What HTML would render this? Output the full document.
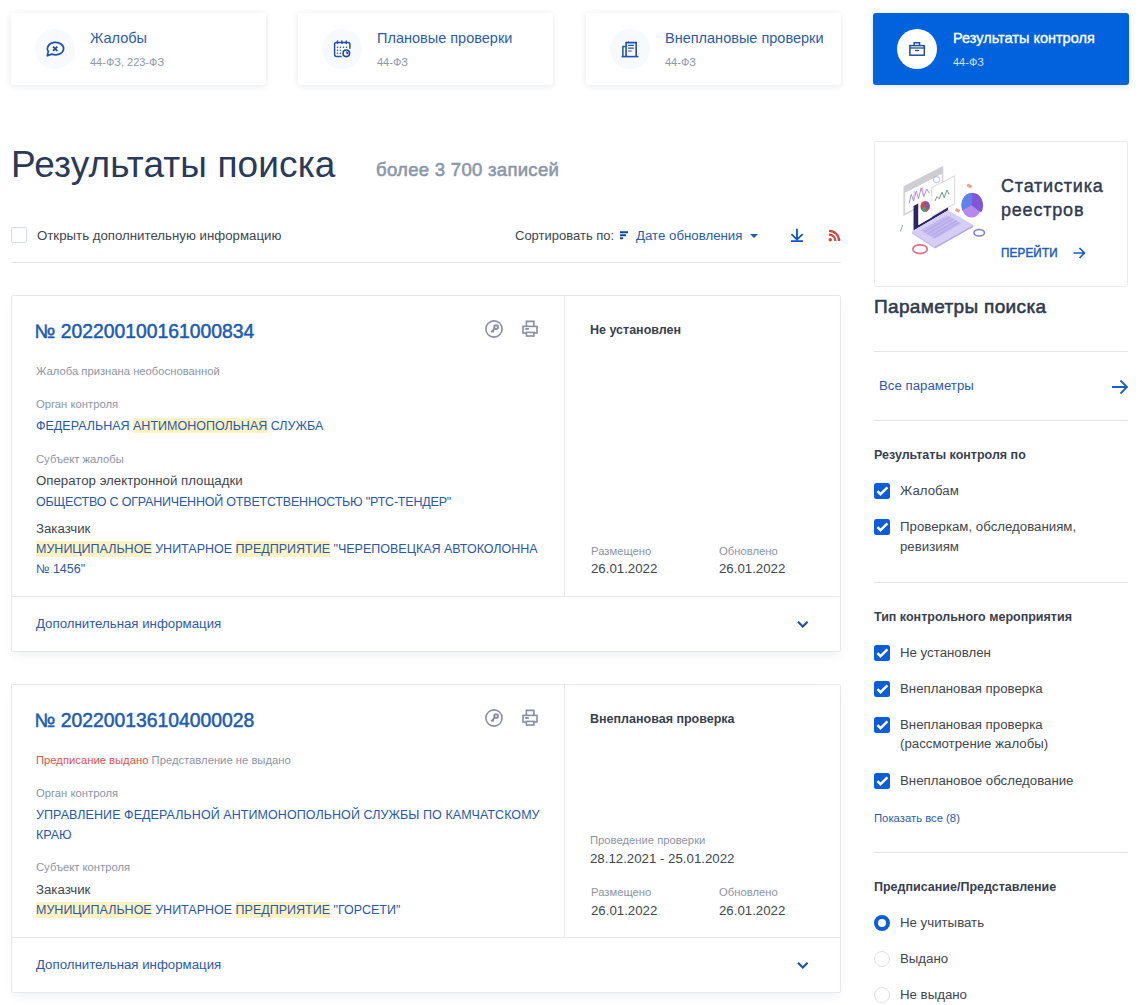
<!DOCTYPE html>
<html><head><meta charset="utf-8">
<style>
*{box-sizing:border-box;margin:0;padding:0}
html,body{width:1141px;height:1005px;overflow:hidden;background:#fff;font-family:"Liberation Sans",sans-serif;color:#333}
.a{position:absolute;white-space:nowrap;line-height:1}
.tcard{position:absolute;top:13px;width:255px;height:71.5px;background:#fff;border-radius:3px;box-shadow:0 1px 6px rgba(40,60,100,0.12)}
.tcard .ic{position:absolute;left:24px;top:16px;width:40px;height:40px;border-radius:50%;background:#f8f9fc}
.tcard .ic svg{position:absolute;left:0;top:-1px}
.tcard.act{background:#0062dc;box-shadow:0 1px 6px rgba(0,60,160,0.15)}
.tcard.act .ic{background:#fff}
.hline{position:absolute;height:1px;background:#e3e6eb}
.card{position:absolute;left:11px;width:830px;border:1px solid #e6e8ed;border-radius:2px;background:#fff;box-shadow:0 6px 10px -3px rgba(40,50,90,0.08)}
.vdiv{position:absolute;top:0;width:1px;background:#e6e8ed}
.num{color:#1b5bb6}
.lblc{color:#8b94a6}
.bluc{color:#2d5aa8}
.upc{color:#2958a6}
.dkc{color:#40464f}
.hl{background:#fdf2c2;padding:1px 0 0.3px}
.bold13{font-weight:bold;color:#394050}
.med{-webkit-text-stroke:0.4px currentColor}
.cb{position:absolute;left:874px;width:16px;height:16px;border-radius:2.5px;background:#0b5ddb}
.cb svg{position:absolute;left:0;top:0}
.rad{position:absolute;left:874px;width:16px;height:16px;border-radius:50%;border:1px solid #dfe2e8;background:#fff}
.rad.on{border:4.5px solid #0b5ddb}
.tcard .t{position:absolute;left:79px;top:17.7px;font-size:14.5px;line-height:14px;color:#2b5cab;white-space:nowrap}
.tcard .s{position:absolute;left:79px;top:43px;font-size:11px;line-height:12px;color:#8c97aa;white-space:nowrap}
.tcard.act .t{color:#fff;left:80px;-webkit-text-stroke:0.35px #fff}
.tcard.act .s{color:#d2e3ff;left:80px}
</style></head><body>
<!-- top cards -->
<div class="tcard" style="left:11px">
  <div class="ic"><svg width="40" height="40" viewBox="0 0 40 40">
    <path d="M16.8 26.1 A8.1 6.2 0 1 0 13.3 23.4 L12.3 27.8 Z" fill="none" stroke="#1d55aa" stroke-width="1.7" stroke-linejoin="round"/>
    <path d="M18.1 18.6 L22.3 22.8 M22.3 18.6 L18.1 22.8" stroke="#1d4a94" stroke-width="1.8"/>
  </svg></div>
  <div class="t">Жалобы</div><div class="s">44-ФЗ, 223-ФЗ</div>
</div>
<div class="tcard" style="left:298px">
  <div class="ic"><svg width="40" height="40" viewBox="0 0 40 40">
    <path d="M19.6 28.4 H14.4 Q12.6 28.4 12.6 26.6 V16.2 Q12.6 14.4 14.4 14.4 H26.1 Q27.9 14.4 27.9 16.2 V20.8" fill="none" stroke="#1f53a6" stroke-width="1.5"/>
    <path d="M15.5 12.6 V16 M19.9 12.6 V16 M24.3 12.6 V16" stroke="#1f53a6" stroke-width="1.5"/>
    <g fill="#1f4a8f"><circle cx="15.5" cy="19.3" r="0.75"/><circle cx="18.4" cy="19.3" r="0.75"/><circle cx="21.5" cy="19.3" r="0.75"/><circle cx="24.5" cy="19.3" r="0.75"/><circle cx="15.5" cy="22.3" r="0.75"/><circle cx="18.4" cy="22.3" r="0.75"/><circle cx="15.5" cy="25.3" r="0.75"/><circle cx="18.4" cy="25.3" r="0.75"/></g>
    <circle cx="24.3" cy="25.3" r="3.3" fill="#fff" stroke="#1f4a94" stroke-width="1.6"/>
    <path d="M24.2 25.4 V23.2 A2.2 2.2 0 0 1 26.1 26.4 Z" fill="#1f4a94"/>
  </svg></div>
  <div class="t">Плановые проверки</div><div class="s">44-ФЗ</div>
</div>
<div class="tcard" style="left:586px">
  <div class="ic"><svg width="40" height="40" viewBox="0 0 40 40">
    <path d="M12.9 28.2 V18.4 H15.6" fill="none" stroke="#1f55ad" stroke-width="1.5"/>
    <path d="M16.1 28.2 V14.6 H26.2 V28.2" fill="none" stroke="#1f4f9e" stroke-width="1.6"/>
    <path d="M18.3 13.6 V14.8" stroke="#1f4f9e" stroke-width="1.2"/>
    <path d="M11.6 28.6 H28.4" stroke="#1f55ad" stroke-width="1.6"/>
    <path d="M18.1 17.4 H23.9 M18.1 20.2 H23.9 M18.1 23 H21.7" stroke="#1f4f9e" stroke-width="1.2"/>
  </svg></div>
  <div class="t">Внеплановые проверки</div><div class="s">44-ФЗ</div>
</div>
<div class="tcard act" style="left:873px;width:256px">
  <div class="ic"><svg width="40" height="40" viewBox="0 0 40 40">
    <rect x="12.9" y="17.6" width="14.4" height="9.6" fill="none" stroke="#1f4e9a" stroke-width="1.5"/>
    <path d="M17.2 17.4 V14.8 H22.6 V17.4" fill="none" stroke="#1f4e9a" stroke-width="1.5"/>
    <path d="M12.9 20 H27.3" stroke="#1f4e9a" stroke-width="1.3"/>
    <path d="M18 22.5 H22" stroke="#1f4e9a" stroke-width="1.3"/>
  </svg></div>
  <div class="t">Результаты контроля</div><div class="s">44-ФЗ</div>
</div>
<div class="a " style="left:11px;top:145.68px;font-size:37px;color:#2a3a57;letter-spacing:0.12px">Результаты поиска</div>
<div class="a med" style="left:376px;top:161.34px;font-size:18.5px;color:#8b97aa;-webkit-text-stroke:0.6px currentColor;letter-spacing:0.3px">более 3 700 записей</div>
<div class="a" style="left:11px;top:227px;width:16px;height:16px;border:1px solid #d9dde4;border-radius:2px"></div>
<div class="a dkc" style="left:37px;top:228.78px;font-size:13.25px;">Открыть дополнительную информацию</div>
<div class="a dkc" style="left:515px;top:229.00px;font-size:13px;">Сортировать по:</div>
<svg class="a" style="left:618px;top:229px" width="12" height="12" viewBox="0 0 12 12"><path d="M2 3.2 H10 M2 6.2 H8 M2 9.2 H5" stroke="#0c4a9e" stroke-width="2"/></svg>
<div class="a bluc" style="left:636px;top:228.78px;font-size:13.25px;">Дате обновления</div>
<svg class="a" style="left:748px;top:232px" width="12" height="8" viewBox="0 0 12 8"><path d="M2 2 H10 L6 6 Z" fill="#1f5bb3"/></svg>
<svg class="a" style="left:789px;top:227px" width="16" height="16" viewBox="0 0 16 16"><path d="M8 1.8 V12 M2.4 7.2 L8 12.6 L13.6 7.2 M2 14.2 H14" fill="none" stroke="#0c54c6" stroke-width="1.8"/></svg>
<svg class="a" style="left:827px;top:228.8px" width="15" height="14" viewBox="0 0 15 14"><circle cx="3.3" cy="10.7" r="1.7" fill="#cc4a40"/><path d="M2 5.6 A6.4 6.4 0 0 1 8.4 12 M2 1.8 A10.2 10.2 0 0 1 12.2 12" fill="none" stroke="#cc4a40" stroke-width="2.2"/></svg>
<div class="hline" style="left:11px;top:262px;width:830px"></div>
<div class="card" style="top:295px;height:357px"><div class="vdiv" style="left:552px;height:301px"></div><div class="hline" style="left:0;top:300px;width:828px;background:#e6e8ed"></div></div>
<div class="a num med" style="left:34.5px;top:322.22px;font-size:19.35px;-webkit-text-stroke:0.5px currentColor">№ 202200100161000834</div>
<svg class="a" style="left:484px;top:319px" width="20" height="20" viewBox="0 0 20 20"><circle cx="10" cy="10" r="8.1" fill="none" stroke="#8a8ea4" stroke-width="1.6"/><circle cx="12.1" cy="8.1" r="1.9" fill="none" stroke="#8a8ea4" stroke-width="1.9"/><path d="M10.6 9.6 L7.3 13.4" stroke="#8a8ea4" stroke-width="2"/><path d="M8.6 12 L9.9 13.2" stroke="#8a8ea4" stroke-width="1.6"/></svg>
<svg class="a" style="left:520px;top:319px" width="20" height="20" viewBox="0 0 20 20"><path d="M6.4 7 V2.4 H13.9 V7" fill="none" stroke="#8a8ea4" stroke-width="1.6"/><rect x="3" y="7.4" width="14" height="6.6" fill="none" stroke="#8a8ea4" stroke-width="1.6"/><rect x="6.4" y="13.4" width="7.5" height="3.6" fill="#fff" stroke="#8a8ea4" stroke-width="1.6"/><rect x="5.2" y="9" width="3.6" height="1.9" fill="#8a8ea4"/></svg>
<div class="a lblc" style="left:36px;top:365.68px;font-size:11.25px;">Жалоба признана необоснованной</div>
<div class="a lblc" style="left:36px;top:399.18px;font-size:11.25px;">Орган контроля</div>
<div class="a upc" style="left:36px;top:420.12px;font-size:12.5px;">ФЕДЕРАЛЬНАЯ <span class="hl">АНТИМОНОПОЛЬНАЯ</span> СЛУЖБА</div>
<div class="a lblc" style="left:36px;top:453.68px;font-size:11.25px;">Субъект жалобы</div>
<div class="a dkc" style="left:36px;top:474.38px;font-size:13.25px;">Оператор электронной площадки</div>
<div class="a upc" style="left:36px;top:495.52px;font-size:12.5px;letter-spacing:-0.2px">ОБЩЕСТВО С ОГРАНИЧЕННОЙ ОТВЕТСТВЕННОСТЬЮ "РТС-ТЕНДЕР"</div>
<div class="a dkc" style="left:36px;top:522.18px;font-size:13.25px;">Заказчик</div>
<div class="a upc" style="left:36px;top:543.32px;font-size:12.5px;"><span class="hl">МУНИЦИПАЛЬНОЕ</span> УНИТАРНОЕ <span class="hl">ПРЕДПРИЯТИЕ</span> "ЧЕРЕПОВЕЦКАЯ АВТОКОЛОННА</div>
<div class="a upc" style="left:36px;top:562.72px;font-size:12.5px;">№ 1456"</div>
<div class="a bluc" style="left:36px;top:617.28px;font-size:13.25px;">Дополнительная информация</div>
<svg class="a" style="left:795px;top:617px" width="16" height="14" viewBox="0 0 16 14"><path d="M3 4.8 L7.8 9.6 L12.6 4.8" fill="none" stroke="#1c50a2" stroke-width="2.1"/></svg>
<div class="a bold13" style="left:590px;top:324.32px;font-size:12.5px;">Не установлен</div>
<div class="a lblc" style="left:591px;top:545.88px;font-size:11.25px;">Размещено</div>
<div class="a lblc" style="left:719px;top:545.88px;font-size:11.25px;">Обновлено</div>
<div class="a dkc" style="left:591px;top:562.48px;font-size:13.25px;">26.01.2022</div>
<div class="a dkc" style="left:719px;top:562.48px;font-size:13.25px;">26.01.2022</div>
<div class="card" style="top:684px;height:309px"><div class="vdiv" style="left:552px;height:252px"></div><div class="hline" style="left:0;top:252px;width:828px;background:#e6e8ed"></div></div>
<div class="a num med" style="left:34.5px;top:711.02px;font-size:19.35px;-webkit-text-stroke:0.5px currentColor">№ 202200136104000028</div>
<svg class="a" style="left:484px;top:708px" width="20" height="20" viewBox="0 0 20 20"><circle cx="10" cy="10" r="8.1" fill="none" stroke="#8a8ea4" stroke-width="1.6"/><circle cx="12.1" cy="8.1" r="1.9" fill="none" stroke="#8a8ea4" stroke-width="1.9"/><path d="M10.6 9.6 L7.3 13.4" stroke="#8a8ea4" stroke-width="2"/><path d="M8.6 12 L9.9 13.2" stroke="#8a8ea4" stroke-width="1.6"/></svg>
<svg class="a" style="left:520px;top:708px" width="20" height="20" viewBox="0 0 20 20"><path d="M6.4 7 V2.4 H13.9 V7" fill="none" stroke="#8a8ea4" stroke-width="1.6"/><rect x="3" y="7.4" width="14" height="6.6" fill="none" stroke="#8a8ea4" stroke-width="1.6"/><rect x="6.4" y="13.4" width="7.5" height="3.6" fill="#fff" stroke="#8a8ea4" stroke-width="1.6"/><rect x="5.2" y="9" width="3.6" height="1.9" fill="#8a8ea4"/></svg>
<div class="a lblc" style="left:36px;top:754.68px;font-size:11.25px;"><span style="color:#d9534f">Предписание выдано</span> Представление не выдано</div>
<div class="a lblc" style="left:36px;top:787.78px;font-size:11.25px;">Орган контроля</div>
<div class="a upc" style="left:36px;top:809.02px;font-size:12.5px;letter-spacing:0.07px">УПРАВЛЕНИЕ ФЕДЕРАЛЬНОЙ АНТИМОНОПОЛЬНОЙ СЛУЖБЫ ПО КАМЧАТСКОМУ</div>
<div class="a upc" style="left:36px;top:828.72px;font-size:12.5px;">КРАЮ</div>
<div class="a lblc" style="left:36px;top:862.48px;font-size:11.25px;">Субъект контроля</div>
<div class="a dkc" style="left:36px;top:883.08px;font-size:13.25px;">Заказчик</div>
<div class="a upc" style="left:36px;top:904.42px;font-size:12.5px;"><span class="hl">МУНИЦИПАЛЬНОЕ</span> УНИТАРНОЕ <span class="hl">ПРЕДПРИЯТИЕ</span> "ГОРСЕТИ"</div>
<div class="a bluc" style="left:36px;top:957.78px;font-size:13.25px;">Дополнительная информация</div>
<svg class="a" style="left:795px;top:958px" width="16" height="14" viewBox="0 0 16 14"><path d="M3 4.8 L7.8 9.6 L12.6 4.8" fill="none" stroke="#1c50a2" stroke-width="2.1"/></svg>
<div class="a bold13" style="left:590px;top:712.52px;font-size:12.5px;">Внеплановая проверка</div>
<div class="a lblc" style="left:590px;top:834.98px;font-size:11.25px;">Проведение проверки</div>
<div class="a dkc" style="left:590px;top:851.58px;font-size:13.25px;">28.12.2021 - 25.01.2022</div>
<div class="a lblc" style="left:591px;top:886.98px;font-size:11.25px;">Размещено</div>
<div class="a lblc" style="left:719px;top:886.98px;font-size:11.25px;">Обновлено</div>
<div class="a dkc" style="left:591px;top:903.58px;font-size:13.25px;">26.01.2022</div>
<div class="a dkc" style="left:719px;top:903.58px;font-size:13.25px;">26.01.2022</div>
<div class="a" style="left:874px;top:141px;width:254px;height:146px;border:1px solid #e8eaee;border-radius:2px"></div>
<svg class="a" style="left:890px;top:155px" width="110" height="110" viewBox="0 0 1005 1005">
  <polygon points="130,290 480,110 480,360 130,545" fill="#fff" stroke="#d3d3d7" stroke-width="14"/>
  <polygon points="130,290 480,110 480,170 130,350" fill="#cdcdd2"/>
  <path d="M175,440 L195,360 L215,420 L240,330 L260,400 L285,300 L310,380 L335,310 L360,350" fill="none" stroke="#9d8fe0" stroke-width="9"/>
  <path d="M220,400 L220,330 M300,360 L300,290" stroke="#e8a0b8" stroke-width="8"/>
  <circle cx="425" cy="225" r="28" fill="none" stroke="#a8b0e8" stroke-width="8"/>
  <polygon points="380,300 590,190 590,445 380,560" fill="#fff" stroke="#dcdce0" stroke-width="10"/>
  <path d="M410,420 L430,380 L450,400 L475,340 L495,390 L520,320 L540,360" fill="none" stroke="#6a9a80" stroke-width="9"/>
  <polygon points="215,465 260,440 260,640 530,480 530,505 215,690" fill="#2a2760"/>
  <polygon points="260,440 380,375 380,570 260,640" fill="#fff"/>
  <ellipse cx="320" cy="470" rx="42" ry="50" fill="#c84a5a"/>
  <path d="M320,470 L285,495 A42,50 0 0 0 340,515 Z" fill="#5a9a70"/>
  <path d="M320,470 L320,420 A42,50 0 0 1 360,490 Z" fill="#7a5ab0"/>
  <polygon points="200,700 535,505 760,640 410,835" fill="#d6cef6"/>
  <polygon points="280,690 520,550 650,625 410,765" fill="#c2b8ee"/>
  <path d="M310,705 L550,565 M340,722 L580,582 M370,740 L610,600 M400,757 L630,615" stroke="#a89ce0" stroke-width="6"/>
  <polygon points="410,835 760,640 760,658 410,855" fill="#b4a8e6"/>
  <polygon points="200,700 410,835 410,855 200,718" fill="#c8bef0"/>
  <ellipse cx="745" cy="460" rx="92" ry="112" fill="#b689ec"/>
  <path d="M745,460 L745,348 A92,112 0 0 0 660,505 Z" fill="#5d82ea"/>
  <path d="M745,460 L745,348 A92,112 0 0 1 832,525 Z" fill="#8256d2"/>
  <rect x="703" y="268" width="44" height="30" fill="#f0a090" transform="rotate(28 725 283)"/>
  <rect x="598" y="492" width="40" height="28" fill="#f0a090" transform="rotate(28 618 506)"/>
  <ellipse cx="815" cy="710" rx="48" ry="30" fill="#fff" stroke="#7a82dc" stroke-width="14"/>
  <ellipse cx="275" cy="860" rx="66" ry="40" fill="#fff" stroke="#e07484" stroke-width="16"/>
  <path d="M95,700 L115,640" stroke="#8a96c8" stroke-width="8"/>
</svg>
<div class="a med" style="left:1001px;top:177.36px;font-size:18px;color:#2f3a4f;letter-spacing:0.8px">Статистика</div>
<div class="a med" style="left:1001px;top:200.96px;font-size:18px;color:#2f3a4f;letter-spacing:0.8px">реестров</div>
<div class="a " style="left:1001px;top:246.72px;font-size:12.5px;color:#1b5ec2;-webkit-text-stroke:0.5px currentColor;letter-spacing:0.2px;transform:scaleX(0.93);transform-origin:0 0">ПЕРЕЙТИ</div>
<svg class="a" style="left:1071px;top:245px" width="16" height="16" viewBox="0 0 16 16"><path d="M2.5 8 H13.5 M8.5 3 L13.5 8 L8.5 13" fill="none" stroke="#1b5ec2" stroke-width="1.7"/></svg>
<div class="a med" style="left:874px;top:297.42px;font-size:19px;color:#2f3a4f;letter-spacing:0.35px;-webkit-text-stroke:0.55px currentColor">Параметры поиска</div>
<div class="hline" style="left:874px;top:351px;width:254px"></div>
<div class="a bluc" style="left:879px;top:379.28px;font-size:13.25px;">Все параметры</div>
<svg class="a" style="left:1110px;top:378px" width="19" height="18" viewBox="0 0 19 18"><path d="M2 9 H17 M10.5 2.5 L17 9 L10.5 15.5" fill="none" stroke="#1b5ec2" stroke-width="1.8"/></svg>
<div class="hline" style="left:874px;top:420px;width:254px"></div>
<div class="a bold13" style="left:874px;top:448.92px;font-size:12.5px;">Результаты контроля по</div>
<div class="cb" style="top:483px"><svg width="16" height="16" viewBox="0 0 16 16"><path d="M3.4 8.1 L6.5 11.2 L13.4 4.4" fill="none" stroke="#fff" stroke-width="2.4"/></svg></div>
<div class="a dkc" style="left:900px;top:483.78px;font-size:13.25px;">Жалобам</div>
<div class="cb" style="top:519px"><svg width="16" height="16" viewBox="0 0 16 16"><path d="M3.4 8.1 L6.5 11.2 L13.4 4.4" fill="none" stroke="#fff" stroke-width="2.4"/></svg></div>
<div class="a dkc" style="left:900px;top:520.28px;font-size:13.25px;">Проверкам, обследованиям,</div>
<div class="a dkc" style="left:900px;top:539.78px;font-size:13.25px;">ревизиям</div>
<div class="hline" style="left:874px;top:582px;width:254px"></div>
<div class="a bold13" style="left:874px;top:610.72px;font-size:12.5px;">Тип контрольного мероприятия</div>
<div class="cb" style="top:645px"><svg width="16" height="16" viewBox="0 0 16 16"><path d="M3.4 8.1 L6.5 11.2 L13.4 4.4" fill="none" stroke="#fff" stroke-width="2.4"/></svg></div>
<div class="a dkc" style="left:900px;top:646.08px;font-size:13.25px;">Не установлен</div>
<div class="cb" style="top:681px"><svg width="16" height="16" viewBox="0 0 16 16"><path d="M3.4 8.1 L6.5 11.2 L13.4 4.4" fill="none" stroke="#fff" stroke-width="2.4"/></svg></div>
<div class="a dkc" style="left:900px;top:682.08px;font-size:13.25px;">Внеплановая проверка</div>
<div class="cb" style="top:717px"><svg width="16" height="16" viewBox="0 0 16 16"><path d="M3.4 8.1 L6.5 11.2 L13.4 4.4" fill="none" stroke="#fff" stroke-width="2.4"/></svg></div>
<div class="a dkc" style="left:900px;top:718.08px;font-size:13.25px;">Внеплановая проверка</div>
<div class="a dkc" style="left:900px;top:737.48px;font-size:13.25px;">(рассмотрение жалобы)</div>
<div class="cb" style="top:773px"><svg width="16" height="16" viewBox="0 0 16 16"><path d="M3.4 8.1 L6.5 11.2 L13.4 4.4" fill="none" stroke="#fff" stroke-width="2.4"/></svg></div>
<div class="a dkc" style="left:900px;top:774.08px;font-size:13.25px;">Внеплановое обследование</div>
<div class="a " style="left:874px;top:813.23px;font-size:11.3px;color:#2d5aa8">Показать все (8)</div>
<div class="hline" style="left:874px;top:852px;width:254px"></div>
<div class="a bold13" style="left:874px;top:880.72px;font-size:12.5px;">Предписание/Представление</div>
<div class="rad on" style="top:915px"></div>
<div class="a dkc" style="left:900px;top:915.78px;font-size:13.25px;">Не учитывать</div>
<div class="rad" style="top:951px"></div>
<div class="a dkc" style="left:900px;top:951.78px;font-size:13.25px;">Выдано</div>
<div class="rad" style="top:987px"></div>
<div class="a dkc" style="left:900px;top:987.78px;font-size:13.25px;">Не выдано</div>
</body></html>
